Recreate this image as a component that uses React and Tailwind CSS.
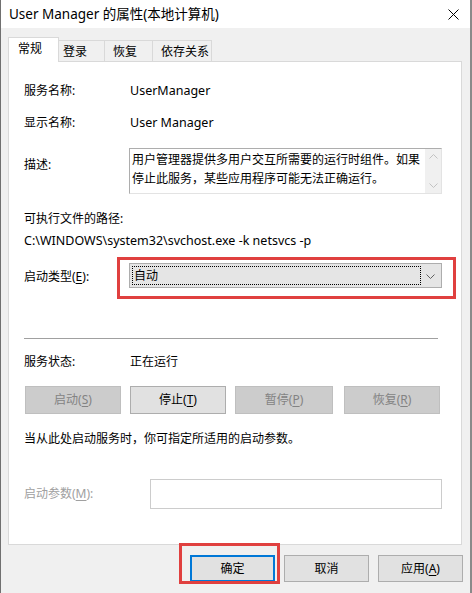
import React from 'react';

const Key = ({ children }) => <u className="underline underline-offset-2">{children}</u>;

const ActionButton = ({ label, hot, disabled, wide }) => (
  <div
    className={`${wide ? 'w-[98px]' : 'w-[96px]'} h-[28px] flex items-center justify-center border ${
      disabled ? 'bg-[#cccccc] border-[#bfbfbf] text-[#838383]' : 'bg-[#e1e1e1] border-[#adadad] text-black'
    }`}
  >
    {label}(<Key>{hot}</Key>)
  </div>
);

const FooterButton = ({ children, primary }) => (
  <div
    className={`w-[85px] h-[27px] flex items-center justify-center bg-[#e1e1e1] ${
      primary ? 'border-2 border-[#0078d7]' : 'border border-[#adadad]'
    }`}
  >
    {children}
  </div>
);

const tabs = [
  { name: '登录', w: 'w-[46px] pl-[4px]' },
  { name: '恢复', w: 'w-[48px] pl-[8px]' },
  { name: '依存关系', w: 'w-[59px] pl-[8px]' },
];

export default function App() {
  return (
    <div className="w-[472px] h-[593px] bg-[#f0f0f0] border-l border-l-[#707070] border-r-2 border-r-[#8a8a8a] flex flex-col overflow-hidden text-[12px] text-black font-['Noto_Sans','Noto_Sans_CJK_SC',sans-serif]">
      {/* title bar */}
      <div className="h-[28px] bg-white flex items-center justify-between pl-[8px] pr-[10px] shrink-0">
        <span className="text-[13.5px]">User Manager 的属性(本地计算机)</span>
        <svg width="11" height="11" viewBox="0 0 11 11" className="mr-[1px]">
          <path d="M0.5 0.5 L10.5 10.5 M10.5 0.5 L0.5 10.5" stroke="#000" strokeWidth="1" />
        </svg>
      </div>

      {/* tabs */}
      <div className="pl-[7px] pr-[8px] mt-[9px]">
        <div className="flex items-end h-[24px] relative z-10">
          <div className="w-[51px] h-[25px] bg-white border border-b-0 border-[#d9d9d9] pl-[9px] pt-[2px] mb-[-1px]">
            常规
          </div>
          {tabs.map((t) => (
            <div
              key={t.name}
              className={`${t.w} h-[21px] bg-[#f0f0f0] border border-l-0 border-b-0 border-[#d9d9d9] pt-[2px]`}
            >
              {t.name}
            </div>
          ))}
        </div>

        {/* panel */}
        <div className="h-[484px] bg-white border border-[#d9d9d9] pl-[15px] pr-[19px]">
          <div className="mt-[19px] h-[20px] flex items-center">
            <span className="w-[106px]">服务名称:</span>
            <span className="text-[12.5px]">UserManager</span>
          </div>
          <div className="mt-[12px] h-[20px] flex items-center">
            <span className="w-[106px]">显示名称:</span>
            <span className="text-[12.5px]">User Manager</span>
          </div>
          <div className="mt-[15px] flex">
            <span className="w-[105px] h-[20px] mt-[7px] flex items-center">描述:</span>
            <div className="flex-1 h-[46px] border border-[#adadad] border-b-[#e3e3e3] border-r-[#e3e3e3] flex">
              <div className="flex-1 pl-[2px] pt-[1px] leading-[19px]">
                用户管理器提供多用户交互所需要的运行时组件。如果停止此服务，某些应用程序可能无法正确运行。
              </div>
              <div className="w-[16px] bg-[#f0f0f0] flex flex-col items-center justify-between py-[5px]">
                <svg width="9" height="5" viewBox="0 0 9 5">
                  <path d="M0.5 4.5 L4.5 0.5 L8.5 4.5" fill="none" stroke="#c2c2c2" />
                </svg>
                <svg width="9" height="5" viewBox="0 0 9 5">
                  <path d="M0.5 0.5 L4.5 4.5 L8.5 0.5" fill="none" stroke="#c2c2c2" />
                </svg>
              </div>
            </div>
          </div>

          <div className="mt-[15px] h-[20px] flex items-center">可执行文件的路径:</div>
          <div className="mt-[2px] h-[20px] flex items-center text-[12.5px]">
            C:\WINDOWS\system32\svchost.exe -k netsvcs -p
          </div>

          <div className="mt-[12px] flex items-center">
            <span className="w-[105px] mt-[2px]">
              启动类型(<Key>E</Key>):
            </span>
            <div className="relative flex-1 h-[25px] bg-[#e5e5e5] border border-[#adadad] flex items-center">
              <div className="absolute left-[2px] top-[2px] bottom-[2px] right-[20px] border border-dotted border-black" />
              <span className="pl-[4px]">自动</span>
              <svg width="9" height="5" viewBox="0 0 9 5" className="absolute right-[6px] top-[10px]">
                <path d="M0.5 0.5 L4.5 4.5 L8.5 0.5" fill="none" stroke="#606060" />
              </svg>
              <div className="absolute -left-[13px] -top-[7px] -right-[15px] -bottom-[12px] border-[3px] border-[#e0403f]" />
            </div>
          </div>

          <div className="mt-[50px] h-px bg-[#a0a0a0] mr-[4px]" />

          <div className="mt-[13px] h-[20px] flex items-center">
            <span className="w-[106px]">服务状态:</span>
            <span>正在运行</span>
          </div>

          <div className="mt-[14px] flex pl-[1px]">
            <ActionButton label="启动" hot="S" disabled />
            <div className="w-[9px]" />
            <ActionButton label="停止" hot="T" />
            <div className="w-[9px]" />
            <ActionButton label="暂停" hot="P" disabled wide />
            <div className="w-[11px]" />
            <ActionButton label="恢复" hot="R" disabled />
          </div>

          <div className="mt-[15px] h-[20px] flex items-center">当从此处启动服务时，你可指定所适用的启动参数。</div>

          <div className="mt-[30px] flex items-center">
            <span className="w-[126px] text-[#a0a0a0]">
              启动参数(<Key>M</Key>):
            </span>
            <div className="flex-1 h-[30px] border border-[#cccccc] bg-white" />
          </div>
        </div>
      </div>

      {/* footer buttons */}
      <div className="flex mt-[10px] pl-[189px] gap-[9px]">
        <div className="relative">
          <FooterButton primary>确定</FooterButton>
          <div className="absolute -left-[11px] -top-[12px] -right-[5px] -bottom-[2px] border-[3px] border-[#e0403f]" />
        </div>
        <FooterButton>取消</FooterButton>
        <FooterButton>
          应用(<Key>A</Key>)
        </FooterButton>
      </div>
    </div>
  );
}
